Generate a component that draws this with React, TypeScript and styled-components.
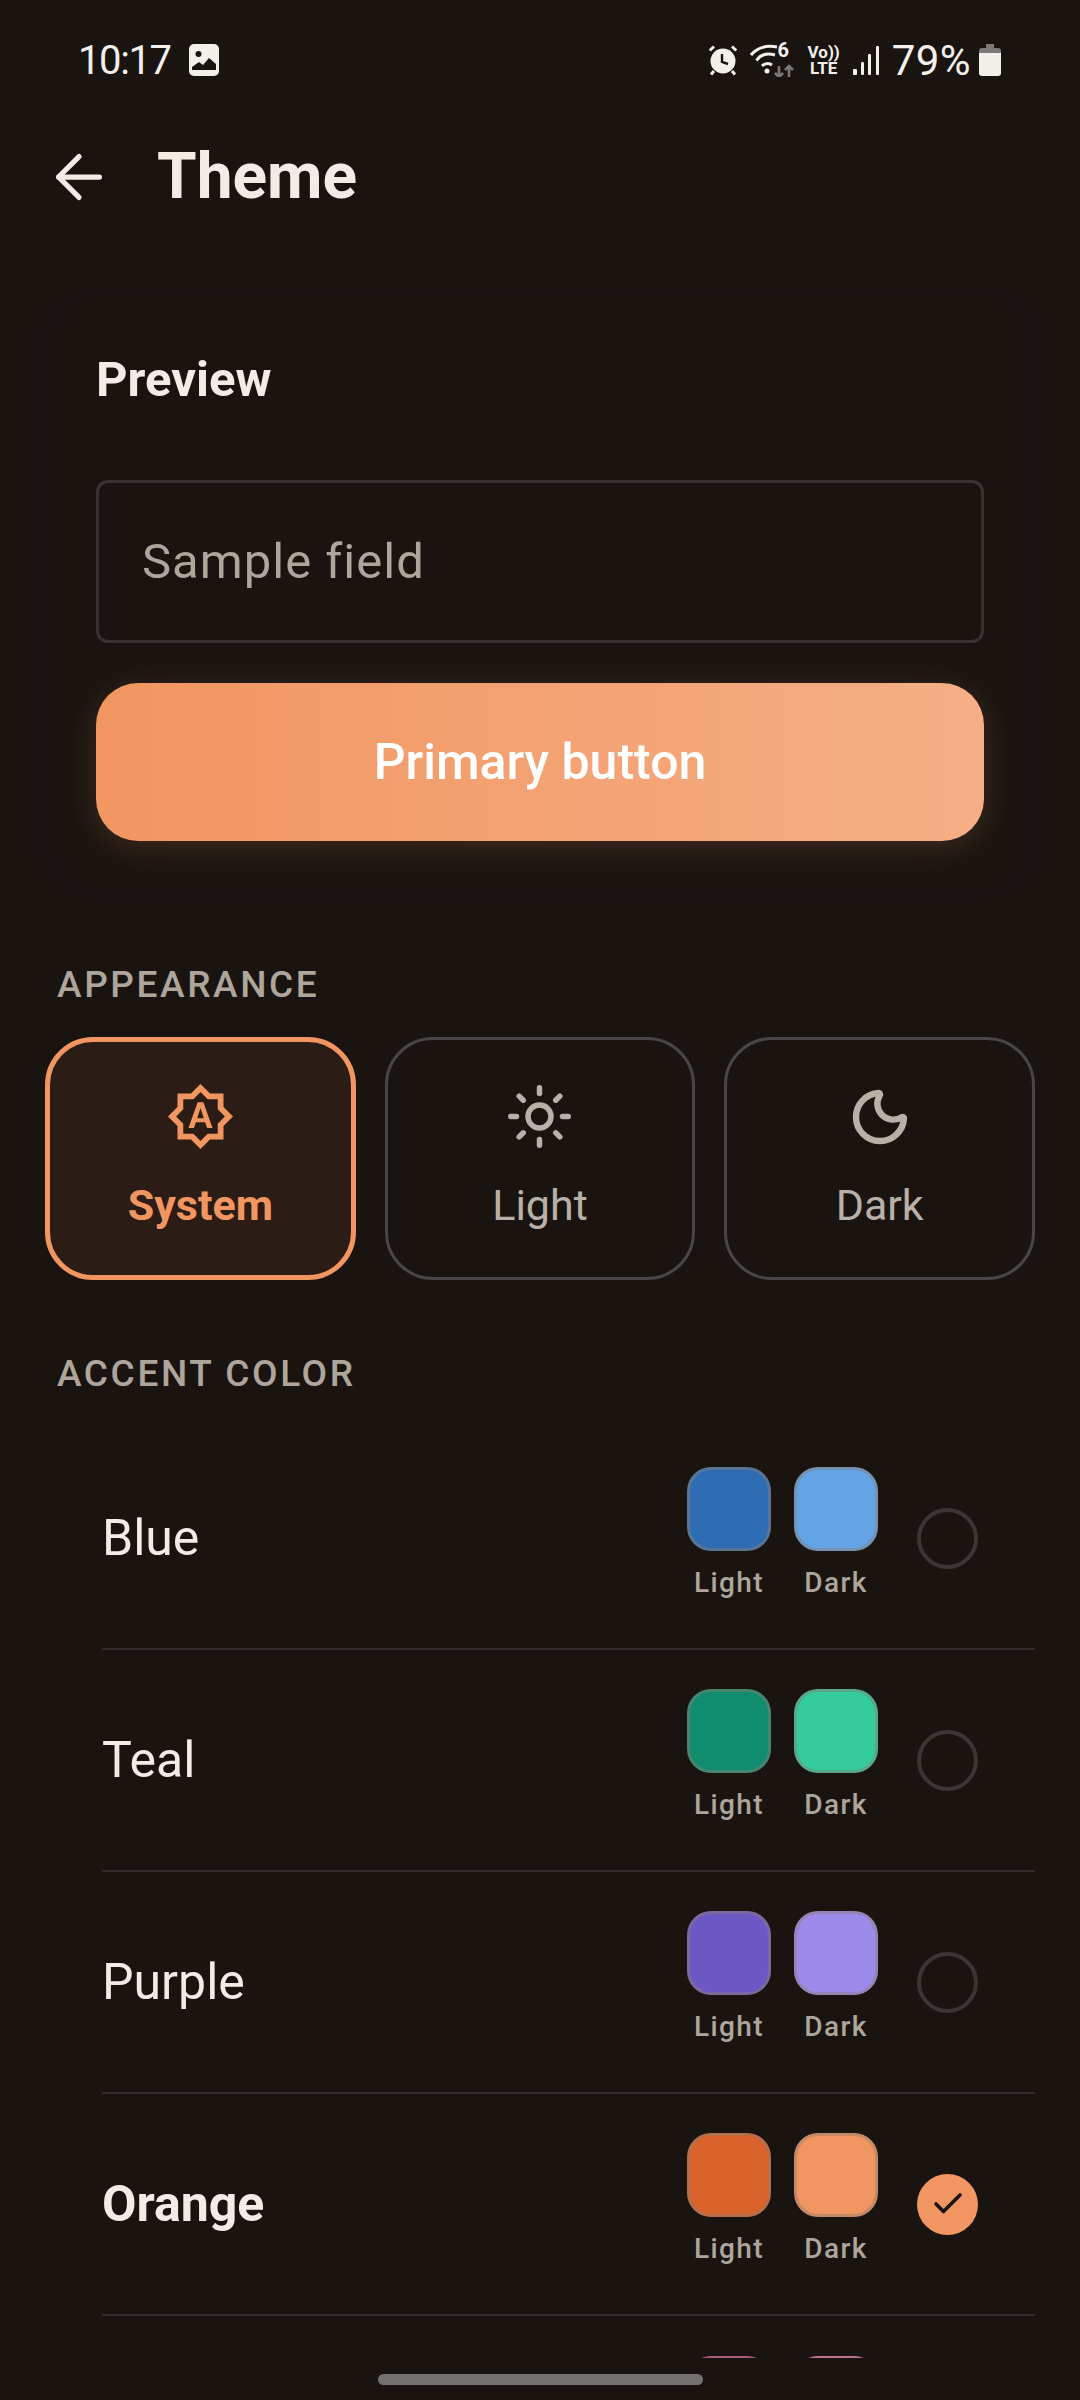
import React from "react";
import styled, { createGlobalStyle } from "styled-components";
import { ArrowLeft, Check, Moon, Sun } from "lucide-react";
import { MdOutlineBrightnessAuto } from "react-icons/md";

const Global = createGlobalStyle`
  html, body { margin: 0; padding: 0; background: #1a1411; }
  body { font-family: Roboto, "Liberation Sans", sans-serif; }
`;

const Page = styled.div`
  width: 1080px;
  height: 2400px;
  background: #1a1411;
  color: #f3ebe4;
  display: flex;
  flex-direction: column;
  overflow: hidden;
`;

const StatusBar = styled.div`
  height: 120px;
  box-sizing: border-box;
  padding: 0 79px 0 78px;
  display: flex;
  align-items: center;
  justify-content: space-between;
  color: #f3f0ec;
`;
const StatusGroup = styled.div<{ $gap: number }>`
  display: flex;
  align-items: center;
  gap: ${(p) => p.$gap}px;
`;
const Clock = styled.span`
  font-size: 40px;
  font-weight: 400;
  letter-spacing: -1.4px;
`;
const Battery = styled.span`
  font-size: 42px;
  font-weight: 400;
  letter-spacing: 0.4px;
  margin-right: -4px;
`;
const VoLte = styled.span`
  display: flex;
  flex-direction: column;
  align-items: center;
  font-size: 17px;
  line-height: 16px;
  font-weight: 700;
`;
const WifiWrap = styled.span`
  position: relative;
  width: 46px;
  height: 34px;
  display: block;
`;
const WifiSix = styled.span`
  position: absolute;
  left: 28px;
  top: -5px;
  font-size: 20px;
  line-height: 24px;
  font-weight: 700;
  color: #f3f0ec;
`;

const TopBar = styled.div`
  height: 114px;
  display: flex;
  align-items: center;
  padding-left: 44px;
  gap: 43px;
`;
const Title = styled.h1`
  margin: 0;
  font-size: 64px;
  font-weight: 700;
  line-height: 70px;
  color: #f3ebe4;
`;

const Scroll = styled.div`
  height: 2124px;
  overflow: hidden;
  display: flex;
  flex-direction: column;
`;

const Card = styled.section`
  margin: 60px 48px 0;
  padding: 60px 48px 48px;
  box-sizing: border-box;
  border-radius: 48px;
  background: #1a1411;
  box-shadow: 0 2px 24px rgba(0, 0, 0, 0.14);
  display: flex;
  flex-direction: column;
`;
const CardTitle = styled.h2`
  margin: 0;
  font-size: 49px;
  line-height: 52px;
  font-weight: 700;
  color: #f3ebe4;
`;
const Field = styled.div`
  margin-top: 74px;
  height: 163px;
  box-sizing: border-box;
  border: 3px solid #3a3230;
  border-radius: 12px;
  padding: 0 43px;
  display: flex;
  align-items: center;
  font-size: 49px;
  letter-spacing: 1px;
  color: #aea59b;
`;
const PrimaryButton = styled.button`
  margin-top: 40px;
  height: 158px;
  flex: none;
  border: 0;
  border-radius: 42px;
  background: linear-gradient(90deg, #f19660, #f5ae86);
  box-shadow: 0 6px 30px rgba(241, 150, 96, 0.18);
  color: #fff;
  font: 500 50px Roboto, sans-serif;
`;

const SectionLabel = styled.div<{ $top: number }>`
  margin: ${(p) => p.$top}px 0 0 57px;
  font-size: 37px;
  line-height: 42px;
  font-weight: 500;
  letter-spacing: 2.6px;
  color: #aea59b;
`;

const ModeRow = styled.div`
  margin: 31px 45px 0;
  display: grid;
  grid-template-columns: repeat(3, 1fr);
  gap: 29px;
`;
const ModeCard = styled.div<{ $active?: boolean }>`
  height: 243px;
  box-sizing: border-box;
  padding-bottom: 7px;
  border-radius: 48px;
  border: ${(p) => (p.$active ? "5px solid #f19660" : "3px solid #4a4648")};
  background: ${(p) => (p.$active ? "#2b1d15" : "#1a1411")};
  color: ${(p) => (p.$active ? "#f19660" : "#b9b1a7")};
  display: flex;
  flex-direction: column;
  align-items: center;
  justify-content: center;
  gap: 25px;
`;
const IconSlot = styled.div`
  height: 74px;
  display: flex;
  align-items: center;
  justify-content: center;
`;
const ModeLabel = styled.span<{ $active?: boolean }>`
  font-size: 43px;
  line-height: 52px;
  font-weight: ${(p) => (p.$active ? 700 : 400)};
`;

const List = styled.div`
  margin: 33px 45px 0 102px;
`;
const Row = styled.div`
  height: 222px;
  flex: none;
  box-sizing: border-box;
  border-bottom: 2px solid #332c2a;
  display: flex;
  align-items: center;
`;
const PeekRow = styled.div`
  height: 60px;
  box-sizing: border-box;
  padding: 40px 157px 0 0;
  display: flex;
  justify-content: flex-end;
`;
const RowName = styled.span<{ $active?: boolean }>`
  flex: 1;
  font-size: 50px;
  font-weight: ${(p) => (p.$active ? 700 : 400)};
  color: #f3ebe4;
`;
const Swatches = styled.div`
  display: flex;
  gap: 23px;
`;
const RowSwatches = styled(Swatches)`
  margin-right: 39px;
  padding-bottom: 10px;
`;
const SwatchColumn = styled.div`
  width: 84px;
  display: flex;
  flex-direction: column;
  align-items: center;
  gap: 15px;
`;
const Swatch = styled.div<{ $color: string }>`
  width: 84px;
  height: 84px;
  flex: none;
  box-sizing: border-box;
  border-radius: 24px;
  background: ${(p) => p.$color};
  border: 3px solid rgba(140, 125, 115, 0.45);
`;
const SwatchLabel = styled.span`
  font-size: 28px;
  line-height: 34px;
  font-weight: 500;
  letter-spacing: 1.4px;
  color: #aea59b;
`;
const Radio = styled.div<{ $on?: boolean }>`
  width: 61px;
  height: 61px;
  margin-right: 57px;
  box-sizing: border-box;
  border-radius: 50%;
  border: ${(p) => (p.$on ? "0" : "4px solid #3c3533")};
  background: ${(p) => (p.$on ? "#f19660" : "transparent")};
  color: #1a1411;
  display: flex;
  align-items: center;
  justify-content: center;
`;

const NavBar = styled.div`
  flex: 1;
  display: flex;
  justify-content: center;
  padding-top: 16px;
`;
const Handle = styled.div`
  width: 325px;
  height: 11px;
  border-radius: 6px;
  background: #747170;
`;

const accents = [
  { name: "Blue", light: "#2e6db4", dark: "#63a4e6" },
  { name: "Teal", light: "#0f8d6e", dark: "#34cb9d" },
  { name: "Purple", light: "#6c58c4", dark: "#9d8bec" },
  { name: "Orange", light: "#d9632a", dark: "#f19660", on: true },
];

const StatusIcons = () => (
  <>
    <svg width="30" height="32" viewBox="0 0 30 32" fill="#f3f0ec" aria-hidden>
      <path d="M5 1.5 0.8 5.6l1.9 2L7 3.5zM25 1.5l4.2 4.1-1.9 2L23 3.5z" />
      <circle cx="15" cy="17" r="12.5" />
      <path d="M14 10v8l6 2" stroke="#1a1411" strokeWidth="2.4" fill="none" />
      <path d="M6 27l-3 3.5M24 27l3 3.5" stroke="#f3f0ec" strokeWidth="3" />
    </svg>
    <WifiWrap>
      <svg width="46" height="34" viewBox="0 0 46 34" aria-hidden>
        <g fill="none" stroke="#f3f0ec" strokeWidth="3">
          <path d="M1 12C7 5 16 2 27 4" />
          <path d="M6.5 17.500C11 11 18 10 25 12" />
          <path d="M12 23c3-3 7-3 10-1" />
        </g>
        <circle cx="17" cy="28" r="2.500" fill="#f3f0ec" />
        <path d="M29 34V23M25 30l4 4 4-4" fill="none" stroke="#7c7876" strokeWidth="2.600" />
        <path d="M39 34V23M35 27l4-4 4 4" fill="none" stroke="#7c7876" strokeWidth="2.600" />
      </svg>
      <WifiSix>6</WifiSix>
    </WifiWrap>
    <VoLte>
      <span>Vo))</span>
      <span>LTE</span>
    </VoLte>
    <svg width="28" height="30" viewBox="0 0 28 30" fill="#f3f0ec" aria-hidden>
      <rect x="1" y="24" width="4" height="6" rx="1" />
      <rect x="9" y="17" width="3" height="13" rx="1" />
      <rect x="16" y="9" width="3" height="21" rx="1" />
      <rect x="24" y="1" width="3" height="29" rx="1" />
    </svg>
    <Battery>79%</Battery>
    <svg width="22" height="32" viewBox="0 0 22 32" aria-hidden>
      <path d="M7 0h8v4h4a3 3 0 0 1 3 3v3H0V7a3 3 0 0 1 3-3h4z" fill="#7c7876" />
      <path d="M0 9h22v20a3 3 0 0 1-3 3H3a3 3 0 0 1-3-3z" fill="#f3f0ec" />
    </svg>
  </>
);

export default function App() {
  return (
    <Page>
      <Global />
      <StatusBar>
        <StatusGroup $gap={18}>
          <Clock>10:17</Clock>
          <svg width="30" height="32" viewBox="0 0 30 32" aria-hidden>
            <rect width="30" height="32" rx="5" fill="#f3f0ec" />
            <circle cx="9.500" cy="10" r="3" fill="#1a1411" />
            <path d="M3 26v-3l7-5 4 3 6-7 7 6v6z" fill="#1a1411" />
          </svg>
        </StatusGroup>
        <StatusGroup $gap={12}>
          <StatusIcons />
        </StatusGroup>
      </StatusBar>
      <TopBar>
        <ArrowLeft size={70} strokeWidth={1.8} color="#f3ebe4" />
        <Title>Theme</Title>
      </TopBar>
      <Scroll>
        <Card>
          <CardTitle>Preview</CardTitle>
          <Field>Sample field</Field>
          <PrimaryButton>Primary button</PrimaryButton>
        </Card>
        <SectionLabel $top={75}>APPEARANCE</SectionLabel>
        <ModeRow>
          <ModeCard $active>
            <IconSlot><MdOutlineBrightnessAuto size={69} /></IconSlot>
            <ModeLabel $active>System</ModeLabel>
          </ModeCard>
          <ModeCard>
            <IconSlot><Sun size={69} strokeWidth={1.9} /></IconSlot>
            <ModeLabel>Light</ModeLabel>
          </ModeCard>
          <ModeCard>
            <IconSlot><Moon size={64} strokeWidth={2.4} /></IconSlot>
            <ModeLabel>Dark</ModeLabel>
          </ModeCard>
        </ModeRow>
        <SectionLabel $top={73}>ACCENT COLOR</SectionLabel>
        <List>
          {accents.map((a) => (
            <Row key={a.name}>
              <RowName $active={a.on}>{a.name}</RowName>
              <RowSwatches>
                <SwatchColumn>
                  <Swatch $color={a.light} />
                  <SwatchLabel>Light</SwatchLabel>
                </SwatchColumn>
                <SwatchColumn>
                  <Swatch $color={a.dark} />
                  <SwatchLabel>Dark</SwatchLabel>
                </SwatchColumn>
              </RowSwatches>
              <Radio $on={a.on}>{a.on && <Check size={36} strokeWidth={2.4} />}</Radio>
            </Row>
          ))}
          <PeekRow>
            <Swatches>
              <Swatch $color="#c2417a" />
              <Swatch $color="#e26fa4" />
            </Swatches>
          </PeekRow>
        </List>
      </Scroll>
      <NavBar><Handle /></NavBar>
    </Page>
  );
}
